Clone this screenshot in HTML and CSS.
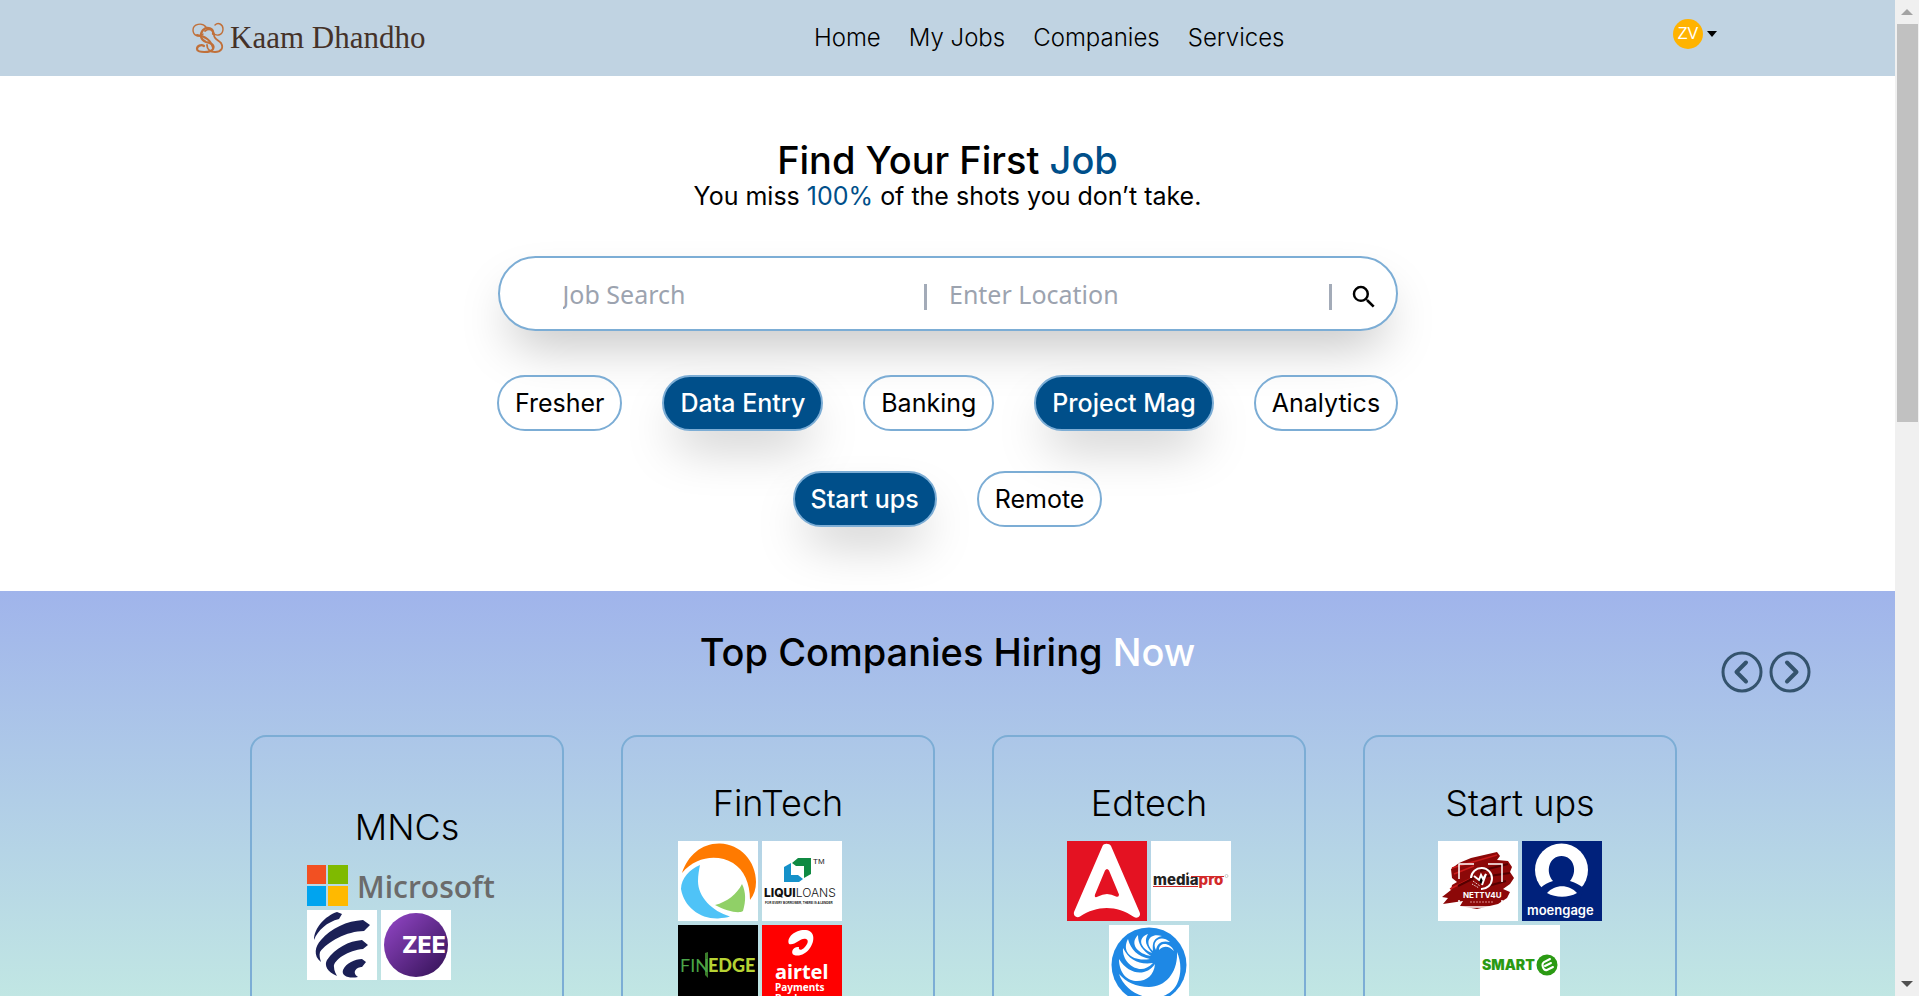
FILE: index.html
```html
<!DOCTYPE html>
<html lang="en">
<head>
<meta charset="utf-8">
<meta name="viewport" content="width=device-width, initial-scale=1">
<title>Kaam Dhandho</title>
<link rel="stylesheet" href="styles.css">
</head>
<body>
<div class="page">
  <header class="navbar">
    <a class="brand" href="#">
      <svg class="brand-mark" viewBox="0 0 32 32" fill="none" stroke="#c0703a" stroke-linecap="round" aria-hidden="true">
        <path stroke-width="1.4" d="M14 5C10 0 1 2 1 8c0 6 7 8 10 4M23 3c3-3 8-1 8 4 0 6-6 8-10 4"/>
        <path stroke-width="2.2" d="M21 12c1-6-6-8-10-4-4 5-2 10 3 12 5 1 9 3 7 7-2 4-16 4-16 0 0-3 4-5 7-3"/>
        <path stroke-width="1.8" d="M13 9c5-4 9 0 9 4 0 4 4 5 7 8 3 5 0 9-6 9-5 0-8-3-8-7M5 13c7 1 14 5 16 13"/>
      </svg>
      <span class="brand-name">Kaam Dhandho</span>
    </a>
    <nav class="nav-links" aria-label="Main">
      <a href="#">Home</a>
      <a href="#">My Jobs</a>
      <a href="#">Companies</a>
      <a href="#">Services</a>
    </nav>
    <button class="account" type="button" aria-label="Account menu">
      <span class="avatar">ZV</span>
      <span class="caret"></span>
    </button>
  </header>

  <main>
    <section class="hero">
      <h1 class="hero-title">Find Your First <span class="accent">Job</span></h1>
      <p class="hero-sub">You miss <span class="accent">100%</span> of the shots you don’t take.</p>
      <form class="search" role="search">
        <input class="search-field" type="text" placeholder="Job Search" aria-label="Job Search">
        <span class="divider"></span>
        <input class="search-field search-place" type="text" placeholder="Enter Location" aria-label="Enter Location">
        <span class="divider"></span>
        <button class="search-button" type="submit" aria-label="Search">
          <svg viewBox="0 0 24 24" aria-hidden="true"><path d="M15.5 14h-.79l-.28-.27A6.47 6.47 0 0 0 16 9.5 6.5 6.5 0 1 0 9.5 16c1.61 0 3.09-.59 4.23-1.57l.27.28v.79l5 4.99L20.49 19l-4.99-5zm-6 0C7.01 14 5 11.99 5 9.5S7.01 5 9.5 5 14 7.01 14 9.5 11.99 14 9.5 14z"/></svg>
        </button>
      </form>
      <div class="tags">
        <button class="tag" type="button">Fresher</button>
        <button class="tag tag-active" type="button">Data Entry</button>
        <button class="tag" type="button">Banking</button>
        <button class="tag tag-active" type="button">Project Mag</button>
        <button class="tag" type="button">Analytics</button>
        <button class="tag tag-active" type="button">Start ups</button>
        <button class="tag" type="button">Remote</button>
      </div>
    </section>

    <section class="companies">
      <div class="companies-head">
        <h2 class="companies-title">Top Companies Hiring <span class="now">Now</span></h2>
        <div class="arrows">
          <button class="arrow" type="button" aria-label="Previous">
            <svg viewBox="0 0 42 42" aria-hidden="true"><circle cx="21" cy="21" r="19"/><path class="chevron" d="M25 11.500L15.500 21l9.500 9.500"/></svg>
          </button>
          <button class="arrow" type="button" aria-label="Next">
            <svg viewBox="0 0 42 42" aria-hidden="true"><circle cx="21" cy="21" r="19"/><path class="chevron" d="M18 11.500L27.500 21 18 30.500"/></svg>
          </button>
        </div>
      </div>

      <div class="cards">
        <article class="card card-low">
          <h3 class="card-title">MNCs</h3>
          <div class="logos">
            <svg class="logo-wide" viewBox="0 0 191 41" role="img" aria-label="Microsoft">
              <path fill="#f25022" d="M0 0h19v19H0z"/><path fill="#7fba00" d="M21 0h20v19H21z"/>
              <path fill="#00a4ef" d="M0 21h19v20H0z"/><path fill="#ffb900" d="M21 21h20v20H21z"/>
              <text x="50" y="33" class="t-open" font-size="30" font-weight="600" fill="#6b6b6b">Microsoft</text>
            </svg>
            <svg class="logo-small" viewBox="0 0 70 70" aria-hidden="true">
              <path fill="#fff" d="M0 0h70v70H0z"/>
              <g fill="#1b2056">
                <path d="M7 30C7 18 18 6 30 2l5 2-3 5C20 12 11 20 7 30z"/>
                <path d="M14 52C6 46 8 36 14 30 24 18 40 11 56 10l7 5-6 6c-17 0-37 11-44 21-1 3 0 7 1 10z"/>
                <path d="M30 66c-10-4-13-11-10-16 8-12 22-19 35-20l6 5-5 4c-14 1-30 11-29 18 0 4 2 7 3 9z"/>
                <path d="M51 67c-9 2-17-1-15-7 3-7 12-11 19-11l4 3-4 5c-5 0-11 5-4 10z"/>
              </g>
            </svg>
            <svg class="logo-small" viewBox="0 0 70 70" role="img" aria-label="ZEE">
              <defs><linearGradient id="zee" x1="0" y1="0" x2="1" y2="1"><stop offset=".1" stop-color="#8b42bd"/><stop offset=".9" stop-color="#3b165f"/></linearGradient></defs>
              <path fill="#fff" d="M0 0h70v70H0z"/><circle cx="35" cy="35" r="32" fill="url(#zee)"/>
              <text x="21" y="43" class="t-inter" font-size="23" font-weight="800" fill="#fff">ZEE</text>
            </svg>
          </div>
        </article>

        <article class="card">
          <h3 class="card-title">FinTech</h3>
          <div class="logos">
            <svg class="logo" viewBox="0 0 80 80" aria-hidden="true">
              <path fill="#fff" d="M0 0h80v80H0z"/>
              <path fill="#ff7a00" d="M4 32C10 14 24 2 42 2.500 62 3 78 20 78 41c0 7-2 13-6 18 0-17-6-30-17-37C40 13 18 15 4 32z"/>
              <path fill="#4fc3f7" d="M22 24C12 28 3 37 3 48c3 18 19 30 37 29.500 5-.5 9-1 12-2C34 70 20 56 20 40c0-6 1-11 2-16z"/>
              <path fill="#90d067" d="M64 43c4 8 4 17 1 27-4 3-17 0-28-6 12-3 22-11 27-21z"/>
            </svg>
            <svg class="logo" viewBox="0 0 80 80" role="img" aria-label="LiquiLoans">
              <path fill="#fff" d="M0 0h80v80H0z"/>
              <path fill="#1591c9" d="M22 26l7-4v12h7l5 4-4 3H22z"/><path fill="#108a43" d="M30 22l6-5h13v16l-7 4V25h-8z"/>
              <text x="51" y="23" class="t-sans" font-size="8" fill="#222">TM</text>
              <text x="2" y="56" class="t-inter" font-size="12" font-weight="800" fill="#111">LIQUI<tspan font-weight="300">LOANS</tspan></text>
              <text x="3" y="63" class="t-sans" font-size="3" font-weight="700" fill="#111">FOR EVERY BORROWER, THERE IS A LENDER</text>
            </svg>
            <svg class="logo" viewBox="0 0 80 80" role="img" aria-label="Finedge">
              <path d="M0 0h80v80H0z"/>
              <path fill="#3b7d2c" d="M27 28l3-1v26l-3-3z"/>
              <text x="2" y="47" class="t-lato" font-size="18" fill="#4ba548">FIN</text>
              <text x="30" y="47" class="t-lato" font-size="18" font-weight="900" fill="#b6d233">EDGE</text>
            </svg>
            <svg class="logo" viewBox="0 0 80 80" role="img" aria-label="Airtel Payments Bank">
              <path fill="#f00" d="M0 0h80v80H0z"/>
              <path fill="#fff" d="M27 19C24 12 34 4 44 5c9 1 9 11 4 18-4 6-11 9-16 7-4-2-1-9 5-8-1 3 2 4 5 1 4-4 5-8 2-9-5-2-11 7-17 5z"/>
              <text x="13" y="54" class="t-noto" font-size="20" font-weight="700" fill="#fff">airtel</text>
              <text x="13" y="66" class="t-noto" font-size="10" font-weight="700" fill="#fff">Payments</text>
              <text x="13" y="77" class="t-noto" font-size="10" font-weight="700" fill="#fff">Bank</text>
            </svg>
          </div>
        </article>

        <article class="card">
          <h3 class="card-title">Edtech</h3>
          <div class="logos logos-center">
            <svg class="logo" viewBox="0 0 80 80" aria-hidden="true">
              <path fill="#e41222" d="M0 0h80v80H0z"/>
              <path fill="#fff" d="M35.500 5c1-3 7-3 8.500 0l28.500 66c2 4-2 7-5.500 5-17-12-37-12-54-.5-3 2-7-.5-6-4.500z"/>
              <path fill="#e41222" d="M38 29.500q2-3 4 0l10 24q0 3-3 2-9-5-18 0-4 2-3-2z"/>
            </svg>
            <svg class="logo" viewBox="0 0 80 80" role="img" aria-label="mediapro">
              <path fill="#fff" d="M0 0h80v80H0z"/>
              <text x="2" y="44" class="t-inter" font-size="15" font-weight="800" fill="#222">media<tspan fill="#d32a2a">pro</tspan></text>
              <path stroke="#fff" stroke-width="3" d="M37 34h37"/>
              <path stroke="#d32a2a" d="M40 35.500h33M2 45.500h45"/>
              <circle cx="75.500" cy="35" r="1.500" fill="none" stroke="#999" stroke-width=".5"/>
            </svg>
            <svg class="logo" viewBox="0 0 80 80" aria-hidden="true">
              <path fill="#fff" d="M0 0h80v80H0z"/><circle cx="40" cy="40" r="37.500" fill="#1e88e5"/>
              <g fill="#fff">
                <path d="M10 49c8 24 45 34 58 10 5-11 4-23 0-32 1 20-11 35-28 35-13 0-23-5-30-13z"/>
                <path d="M10 34c0 15 9 22 18 22 10 0 17-6 18-17-9 13-26 11-36-5z"/>
                <path d="M14 23c-1 12 9 21 18 21 4 0 8-2 12-6-14 2-24-3-30-15z"/>
                <path d="M19 14c-7 13 4 23 22 20-13-3-19-9-22-20z"/>
                <path d="M29 10c-9 9 0 19 13 21-9-6-13-12-13-21z"/>
                <path d="M39 9c-11 4-8 14 4 19-6-8-8-12-4-19z"/>
                <path d="M53 11c-13-4-18 7-9 15-1-9 1-13 9-15z"/>
                <path d="M61 17c-9-8-19-1-14 8 1-7 6-10 14-8z"/>
                <path d="M65 26c-4-9-15-9-15-1 5-5 10-4 15 1z"/>
              </g>
            </svg>
          </div>
        </article>

        <article class="card">
          <h3 class="card-title">Start ups</h3>
          <div class="logos logos-center">
            <svg class="logo" viewBox="0 0 80 80" role="img" aria-label="NETTV4U">
              <path fill="#fff" d="M0 0h80v80H0z"/>
              <path fill="#8c0808" d="M13 28l8-6 12-5 26-6 3 4-3 4 11 1 4 6-2 5 4 6-4 6-7 5 7 3-3 6-9 6-21 5-17-3 3-5-20 3 5-6-6-1 9-7 1-5 5-3-5-4z"/>
              <path stroke="#c81a1a" stroke-width="1.500" d="M14 27l45-13M12 48l20-10M16 33l20-8"/>
              <path stroke="#500" stroke-width="2" d="M42 30l28-7M44 36l28-4M20 45l16-8M50 45l18-5"/>
              <path fill="none" stroke="#fff" stroke-width="1.500" d="M21 38V23h15M50 23h14v18M21 59v7h43v-7"/>
              <path fill="none" stroke="#fff" stroke-width="2" d="M33 37a10.500 10.500 0 1 1 10 11"/>
              <path stroke="#fff" stroke-width="2" d="M36 35l5 4 2-5 2 4 3-5-4 11"/><path stroke="#fff" stroke-dasharray="1 1" d="M35 40l7 5M34 43l7 4"/>
              <text x="25" y="57" class="t-inter" font-size="8" font-weight="700" fill="#fff">NETTV4U</text>
              <path stroke="#d88" stroke-dasharray="2 1" d="M32 61h23"/>
            </svg>
            <svg class="logo" viewBox="0 0 80 80" role="img" aria-label="moengage">
              <path fill="#00217b" d="M0 0h80v80H0z"/><circle cx="39.500" cy="29" r="26.500" fill="#fff"/>
              <path fill="#00217b" d="M19 46.500c3-3 7-5 12-6.500-8-9-4-25 8.500-25S56 31 48 40c5 1.500 9 3.500 13 6.500L58 60H20z"/>
              <path fill="#fff" d="M25 52c8-9 22-9 30 0-9 5-21 5-30 0z"/>
              <text x="5" y="74" class="t-inter" font-size="13" font-weight="600" fill="#fff">moengage</text>
            </svg>
            <svg class="logo" viewBox="0 0 80 80" role="img" aria-label="SmartE">
              <path fill="#fff" d="M0 0h80v80H0z"/>
              <text x="2" y="45" class="t-inter" font-size="14" font-weight="900" fill="#2b9a13">SMART</text>
              <circle cx="67" cy="40" r="10.500" fill="#2b9a13"/>
              <path fill="none" stroke="#fff" stroke-width="2" stroke-linecap="round" d="M70 34l-6 3c-3 2-1 9 3 8l6-3M65 41l6-3"/>
            </svg>
          </div>
        </article>
      </div>
    </section>
  </main>
</div>
<div class="scrollbar" aria-hidden="true">
  <span class="scroll-up"></span>
  <span class="scroll-thumb"></span>
  <span class="scroll-down"></span>
</div>
</body>
</html>
```
FILE: styles.css
```css
* { box-sizing: border-box; }

body {
  margin: 0;
  display: flex;
  height: 100vh;
  overflow: hidden;
  background: #fff;
  color: #000;
  font-family: Inter, "Liberation Sans", sans-serif;
}

h1, h2, h3, p { margin: 0; }
a { color: inherit; text-decoration: none; }
button { font: inherit; color: inherit; cursor: pointer; }

.page { flex: 1; min-width: 0; height: 100vh; overflow: hidden; }

/* Navigation */
.navbar {
  display: flex;
  align-items: center;
  justify-content: space-between;
  height: 76px;
  padding: 0 178px 0 192px;
  background: #c0d3e2;
}
.brand { display: flex; align-items: center; gap: 6px; }
.brand-mark { width: 32px; height: 32px; }
.brand-name {
  font-family: "Liberation Serif", serif;
  font-size: 31px;
  line-height: 40px;
  color: #453229;
}
.nav-links { display: flex; gap: 28px; font-size: 24px; line-height: 32px; font-weight: 300; }
.account {
  display: flex;
  align-items: center;
  gap: 4px;
  padding: 0 0 8px;
  border: 0;
  background: none;
}
.avatar {
  width: 30px;
  height: 30px;
  border-radius: 50%;
  background: #ffb300;
  color: #fff;
  font: 16px/30px "Liberation Sans", sans-serif;
  text-align: center;
}
.caret { border: 5px solid transparent; border-top: 6px solid #000; border-bottom: 0; }

/* Hero */
.hero {
  display: flex;
  flex-direction: column;
  align-items: center;
  padding: 64px 24px;
}
.hero-title { font-size: 38px; line-height: 40px; font-weight: 500; }
.hero-sub { font-size: 25px; line-height: 32px; }
.accent { color: #004f8a; }
.search {
  display: flex;
  align-items: center;
  width: 100%;
  max-width: 900px;
  height: 75px;
  margin: 44px 0;
  padding: 6px 17px 0 63px;
  border: 2px solid #7cadd5;
  border-radius: 40px;
  background: #fff;
  box-shadow: 0 25px 50px -12px rgba(0, 0, 0, .25);
}
.search-field {
  flex: 361;
  min-width: 0;
  padding: 0 0 6px;
  border: 0;
  outline: 0;
  background: none;
  font: 25px/32px "Noto Sans", sans-serif;
}
.search-place { flex: 379; margin-left: 22px; }
.search-field::placeholder { color: #9ca3af; opacity: 1; }
.divider { width: 3px; height: 26px; background: #a3abb8; }
.search-button { margin-left: 17px; padding: 0; border: 0; background: none; }
.search-button svg { display: block; width: 30px; height: 30px; }

.tags {
  display: flex;
  flex-wrap: wrap;
  justify-content: center;
  gap: 40px;
  max-width: 960px;
}
.tag {
  height: 56px;
  padding: 0 16px;
  border: 2px solid #7cadd5;
  border-radius: 28px;
  background: none;
  font-size: 25px;
  line-height: 32px;
}
.tag-active {
  background: #004f8a;
  color: #fff;
  font-weight: 500;
  box-shadow: 0 25px 50px -12px rgba(0, 0, 0, .25);
}

/* Companies */
.companies {
  min-height: 440px;
  padding-top: 41px;
  background: linear-gradient(#a0b4eb, #c2e8e3 420px);
}
.companies-head {
  display: grid;
  grid-template-columns: 1fr auto 1fr;
  padding: 0 84px;
}
.companies-title { grid-column: 2; font-size: 38px; line-height: 40px; font-weight: 500; }
.now { color: #fff; }
.arrows { display: flex; gap: 6px; justify-self: end; padding-top: 19px; }
.arrow { padding: 0; border: 0; background: none; }
.arrow svg {
  display: block;
  width: 42px;
  height: 42px;
  fill: none;
  stroke: #34536d;
  stroke-width: 3;
}
.arrow .chevron { stroke-width: 4; stroke-linecap: round; stroke-linejoin: round; }

.cards {
  display: grid;
  grid-template-columns: repeat(4, minmax(0, 1fr));
  gap: 57px;
  padding: 42px 218px 0 250px;
}
.card {
  display: flex;
  flex-direction: column;
  align-items: center;
  min-height: 400px;
  padding-top: 46px;
  border: 2px solid #7cadd5;
  border-radius: 16px;
}
.card-low { padding-top: 70px; }
.card-title { margin-bottom: 18px; font-size: 36px; line-height: 40px; font-weight: 300; }
.logos { display: flex; flex-wrap: wrap; gap: 4px; width: 200px; }
.logos-center { justify-content: center; }
.logo { width: 80px; height: 80px; }
.logo-small { width: 70px; height: 70px; }
.logo-wide { width: 191px; height: 41px; }

.t-open { font-family: "Open Sans", sans-serif; }
.t-inter { font-family: Inter, sans-serif; }
.t-sans { font-family: "Liberation Sans", sans-serif; }
.t-lato { font-family: Lato, sans-serif; }
.t-noto { font-family: "Noto Sans", sans-serif; }

/* Scrollbar */
.scrollbar {
  display: flex;
  flex-direction: column;
  align-items: center;
  width: 24px;
  height: 100vh;
  padding: 9px 0;
  background: #f0f0f0;
}
.scroll-up { border: 6px solid transparent; border-top: 0; border-bottom-color: #a3a3a3; }
.scroll-thumb { width: 21px; height: 40vh; margin: 9px 0 auto; background: #c1c1c1; }
.scroll-down { border: 6px solid transparent; border-bottom: 0; border-top-color: #505050; }
```
